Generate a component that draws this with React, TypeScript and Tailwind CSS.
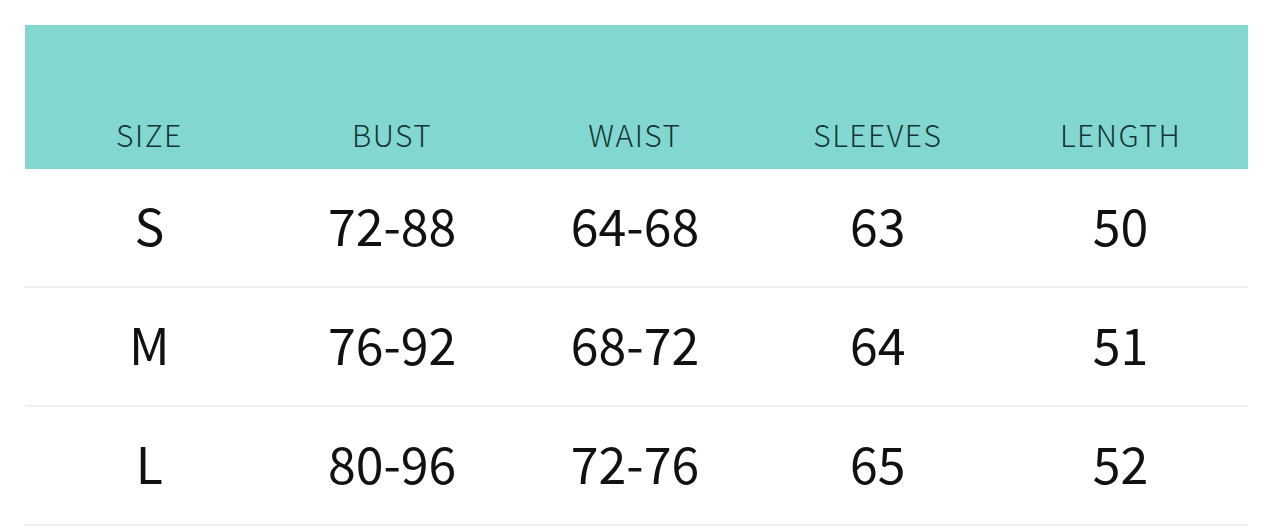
const columns = ['SIZE', 'BUST', 'WAIST', 'SLEEVES', 'LENGTH'];

const rows = [
  ['S', '72-88', '64-68', '63', '50'],
  ['M', '76-92', '68-72', '64', '51'],
  ['L', '80-96', '72-76', '65', '52'],
];

export default function App() {
  return (
    <div
      className="w-full h-[528px] bg-white pt-[25px] pl-[25px] pr-[32px] overflow-hidden"
      style={{ fontFamily: '"Noto Sans CJK SC", "Noto Sans", sans-serif' }}
    >
      {/* Kopfzeile */}
      <div className="h-[144px] bg-[#82d8d0] grid grid-cols-5 items-end pb-[20px] pl-[3px] pr-[6px]">
        {columns.map((col) => (
          <div
            key={col}
            className="text-center text-[30px] leading-none font-light tracking-[1.5px] text-[#173536]"
          >
            {col}
          </div>
        ))}
      </div>

      {rows.map((row) => (
        <div
          key={row[0]}
          className="h-[119px] grid grid-cols-5 items-center border-b-2 border-[#efefef] pl-[3px] pr-[6px]"
        >
          {row.map((cell, i) => (
            <div
              key={i}
              className="text-center text-[50px] leading-none text-[#111] pb-[8px]"
            >
              {cell}
            </div>
          ))}
        </div>
      ))}
    </div>
  );
}
